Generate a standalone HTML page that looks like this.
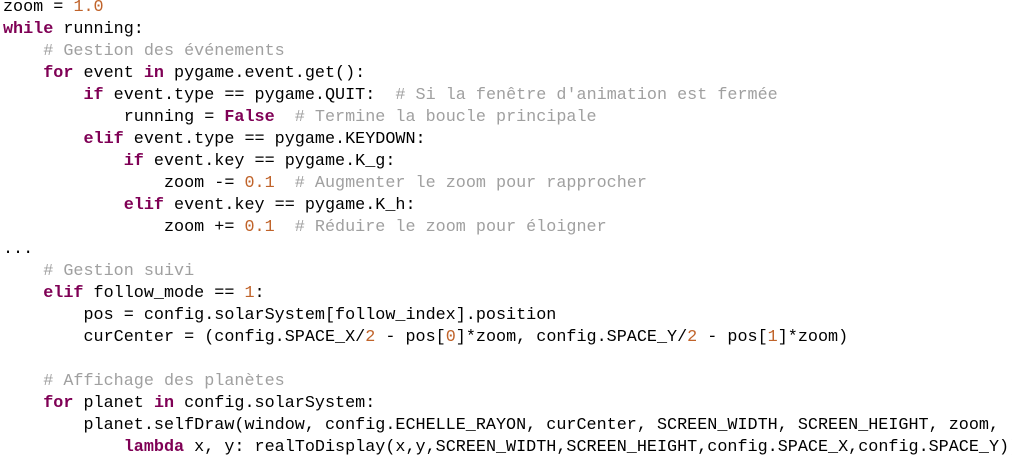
<!DOCTYPE html>
<html><head><meta charset="utf-8"><style>
html,body{margin:0;padding:0;background:#fff;width:1012px;height:460px;overflow:hidden}
pre{position:absolute;left:3px;top:-3px;margin:0;font-family:"Liberation Mono",monospace;font-size:16.78px;line-height:22px;color:#000;white-space:pre}
.k{color:#7f0055;font-weight:bold}
.n{color:#c0632a}
.c{color:#a0a0a0}
</style></head><body><pre>zoom = <span class="n">1.0</span>
<span class="k">while</span> running:
    <span class="c"># Gestion des événements</span>
    <span class="k">for</span> event <span class="k">in</span> pygame.event.get():
        <span class="k">if</span> event.type == pygame.QUIT:  <span class="c"># Si la fenêtre d'animation est fermée</span>
            running = <span class="k">False</span>  <span class="c"># Termine la boucle principale</span>
        <span class="k">elif</span> event.type == pygame.KEYDOWN:
            <span class="k">if</span> event.key == pygame.K_g:
                zoom -= <span class="n">0.1</span>  <span class="c"># Augmenter le zoom pour rapprocher</span>
            <span class="k">elif</span> event.key == pygame.K_h:
                zoom += <span class="n">0.1</span>  <span class="c"># Réduire le zoom pour éloigner</span>
...
    <span class="c"># Gestion suivi</span>
    <span class="k">elif</span> follow_mode == <span class="n">1</span>:
        pos = config.solarSystem[follow_index].position
        curCenter = (config.SPACE_X/<span class="n">2</span> - pos[<span class="n">0</span>]*zoom, config.SPACE_Y/<span class="n">2</span> - pos[<span class="n">1</span>]*zoom)

    <span class="c"># Affichage des planètes</span>
    <span class="k">for</span> planet <span class="k">in</span> config.solarSystem:
        planet.selfDraw(window, config.ECHELLE_RAYON, curCenter, SCREEN_WIDTH, SCREEN_HEIGHT, zoom,
            <span class="k">lambda</span> x, y: realToDisplay(x,y,SCREEN_WIDTH,SCREEN_HEIGHT,config.SPACE_X,config.SPACE_Y))
</pre></body></html>
